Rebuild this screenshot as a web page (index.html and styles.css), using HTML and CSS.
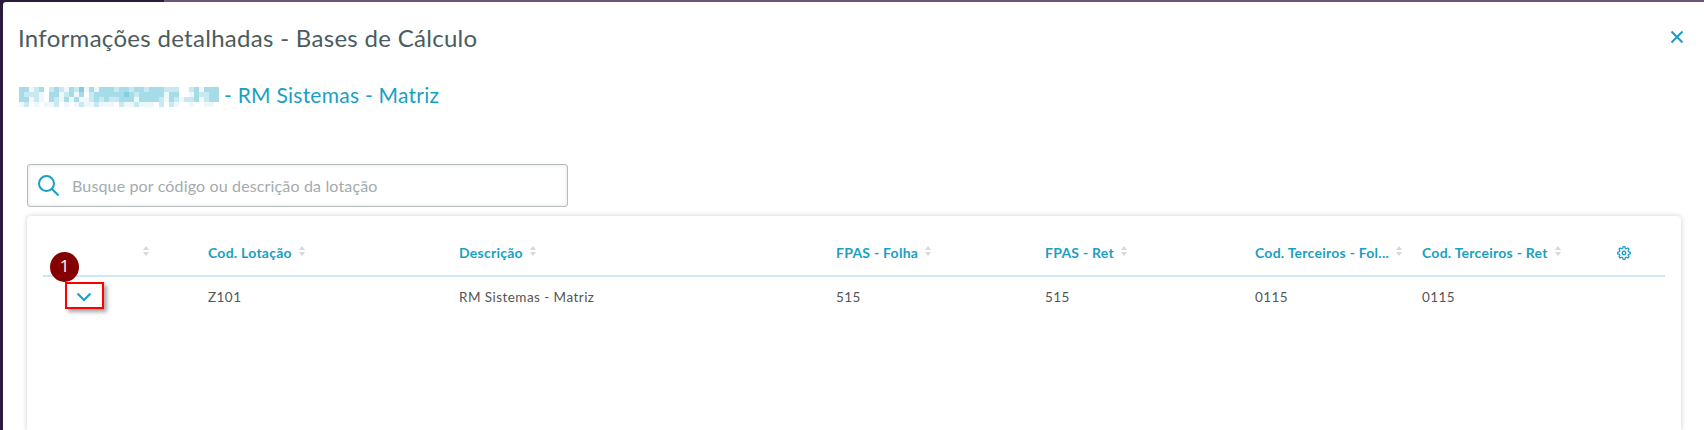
FILE: index.html
```html
<!DOCTYPE html>
<html lang="pt-BR">
<head>
  <meta charset="UTF-8" />
  <title>Informações detalhadas - Bases de Cálculo</title>
  <link rel="stylesheet" href="styles.css">
</head>
<body>
  <div class="topstrip"></div>
  <div class="modal">
    <div class="modal-head">
      <h1>Informações detalhadas - Bases de Cálculo</h1>
      <svg class="close" width="14" height="14" viewBox="0 0 14 14"><path d="M1.500 1.500l11 11M12.500 1.500l-11 11" fill="none" stroke="#1a9fc4" stroke-width="2"/></svg>
    </div>

    <div class="company">
      <svg class="blur" width="200" height="20" viewBox="0 0 40 4" shape-rendering="crispEdges" fill="none" stroke-width="1">
        <path stroke="#a6dbe8" d="M0 .5h2M4 .5h1M7 .5h1M10 .5h1M14 .5h1M16 .5h3M20 .5h2M23 .5h2M26 .5h3M35 .5h1M37 .5h3M0 1.500h1M6 1.500h2M10 1.500h1M12 1.500h1M15 1.500h6M22 1.500h1M24 1.500h5M30 1.500h2M35 1.500h1M38 1.500h2M0 2.500h2M6 2.500h1M9 2.500h1M11 2.500h1M15 2.500h1M17 2.500h1M20 2.500h3M24 2.500h4M30 2.500h1M35 2.500h1M38 2.500h2"/>
        <path stroke="#86cde0" d="M12 .5h1M21 1.500h1"/>
        <path stroke="#c8e9f1" d="M3 .5h1M6 .5h1M8 .5h1M11 .5h1M19 .5h1M22 .5h1M25 .5h1M29 .5h3M34 .5h1M1 1.500h3M9 1.500h1M14 1.500h1M23 1.500h1M36 1.500h2M3 2.500h1M7 2.500h1M14 2.500h1M16 2.500h1M18 2.500h2M28 2.500h1M31 2.500h1M33 2.500h2M37 2.500h1M1 3.500h1M7 3.500h1M12 3.500h1M15 3.500h1M20 3.500h1M23 3.500h1M28 3.500h1M30 3.500h1"/>
        <path stroke="#eef8fb" d="M2 .5h1M9 .5h1M13 .5h1M15 .5h1M36 .5h1M4 1.500h1M8 1.500h1M11 1.500h1M29 1.500h1M34 1.500h1M2 2.500h1M4 2.500h1M8 2.500h1M10 2.500h1M12 2.500h2M23 2.500h1M29 2.500h1M32 2.500h1M36 2.500h1M0 3.500h1M3 3.500h1M5 3.500h2M9 3.500h1M11 3.500h1M13 3.500h2M16 3.500h3M21 3.500h2M24 3.500h3M31 3.500h1M34 3.500h1M37 3.500h2"/>
      </svg>
      <span class="company-name">- RM Sistemas - Matriz</span>
    </div>

    <div class="search">
      <svg width="21" height="21" viewBox="0 0 21 21" fill="none" stroke="#1a9fc4" stroke-width="2"><circle cx="8.500" cy="8.500" r="7.500"/><path d="M14 14l6.500 6.500"/></svg>
      <span>Busque por código ou descrição da lotação</span>
    </div>

    <div class="card">
      <div class="row head">
        <div class="cell first"><i class="sort"></i></div>
        <div class="cell">Cod. Lotação <i class="sort"></i></div>
        <div class="cell">Descrição <i class="sort"></i></div>
        <div class="cell">FPAS - Folha <i class="sort"></i></div>
        <div class="cell">FPAS - Ret <i class="sort"></i></div>
        <div class="cell">Cod. Terceiros - Fol... <i class="sort"></i></div>
        <div class="cell">Cod. Terceiros - Ret <i class="sort"></i></div>
        <div class="cell gear">
          <svg width="14" height="14" viewBox="0 0 24 24" fill="none" stroke="#1a9fc4" stroke-width="2.200" stroke-linejoin="round"><circle cx="12" cy="12" r="3"/><path d="M19.400 15a1.650 1.650 0 0 0 .33 1.820l.06.06a2 2 0 0 1 0 2.830 2 2 0 0 1-2.830 0l-.06-.06a1.650 1.650 0 0 0-1.820-.33 1.650 1.650 0 0 0-1 1.510V21a2 2 0 0 1-2 2 2 2 0 0 1-2-2v-.09A1.650 1.650 0 0 0 9 19.400a1.650 1.650 0 0 0-1.820.33l-.06.06a2 2 0 0 1-2.830 0 2 2 0 0 1 0-2.830l.06-.06a1.650 1.650 0 0 0 .33-1.820 1.650 1.650 0 0 0-1.510-1H3a2 2 0 0 1-2-2 2 2 0 0 1 2-2h.09A1.650 1.650 0 0 0 4.600 9a1.650 1.650 0 0 0-.33-1.820l-.06-.06a2 2 0 0 1 0-2.830 2 2 0 0 1 2.830 0l.06.06a1.650 1.650 0 0 0 1.820.33H9a1.650 1.650 0 0 0 1-1.510V3a2 2 0 0 1 2-2 2 2 0 0 1 2 2v.09a1.650 1.650 0 0 0 1 1.510 1.650 1.650 0 0 0 1.820-.33l.06-.06a2 2 0 0 1 2.830 0 2 2 0 0 1 0 2.830l-.06.06a1.650 1.650 0 0 0-.33 1.820V9a1.650 1.650 0 0 0 1.510 1H21a2 2 0 0 1 2 2 2 2 0 0 1-2 2h-.09a1.650 1.650 0 0 0-1.510 1z"/></svg>
        </div>
      </div>
      <div class="row body">
        <div class="cell first">
          <svg class="chevron" width="16" height="10" viewBox="0 0 16 10"><path d="M1.500 1.500L8 8l6.500-6.500" fill="none" stroke="#1a9fc4" stroke-width="2"/></svg>
        </div>
        <div class="cell">Z101</div>
        <div class="cell">RM Sistemas - Matriz</div>
        <div class="cell">515</div>
        <div class="cell">515</div>
        <div class="cell">0115</div>
        <div class="cell">0115</div>
        <div class="cell"></div>
      </div>
      <div class="marker"></div>
      <div class="step">1</div>
    </div>
  </div>
</body>
</html>
```
FILE: styles.css
```css
html, body {
  margin: 0;
  height: 100%;
  overflow: hidden;
}

body {
  background: #2b1b3d;
  font-family: "Lato", "Open Sans", sans-serif;
}

.topstrip {
  height: 2px;
  margin-left: 164px;
  background: #6c5578;
}

.modal {
  margin-left: 3px;
  height: 428px;
  overflow: hidden;
  background: #fff;
  border-radius: 3px 0 0 0;
  padding: 0 23px 0 15px;
  box-sizing: border-box;
}

.modal-head {
  height: 73px;
  display: flex;
  align-items: center;
  justify-content: space-between;
}

h1 {
  margin: 0 0 2px;
  font-size: 24px;
  font-weight: 400;
  letter-spacing: .3px;
  color: #4a5c60;
}

.close {
  margin: -3px -3px 0 0;
}

.company {
  display: flex;
  align-items: center;
  gap: 5px;
  height: 24px;
  margin: 10px 0 0 1px;
  font-size: 21px;
  letter-spacing: .25px;
  color: #1a9fc4;
}

.company-name {
  margin-bottom: 6px;
}

.search {
  width: 541px;
  height: 43px;
  box-sizing: border-box;
  margin: 55px 0 0 9px;
  padding-left: 10px;
  display: flex;
  align-items: center;
  gap: 13px;
  border: 1px solid #b6bdbf;
  border-radius: 3px;
  box-shadow: inset 0 0 4px rgba(0, 0, 0, .12);
  font-size: 16px;
  letter-spacing: .15px;
  color: #a3abad;
}

.card {
  position: relative;
  width: 1654px;
  height: 214px;
  box-sizing: border-box;
  margin: 9px 0 0 9px;
  padding: 0 16px;
  border-radius: 4px 4px 0 0;
  box-shadow: 0 0 5px rgba(0, 0, 0, .2);
}

.row {
  display: grid;
  grid-template-columns: 165px 251px 377px 209px 210px 167px 195px 1fr;
  align-items: center;
}

.head {
  height: 59px;
  border-bottom: 2px solid #c9e9f3;
  font-size: 14px;
  font-weight: 700;
  letter-spacing: .25px;
  color: #1a9fc4;
}

.body {
  height: 40px;
  font-size: 13.500px;
  letter-spacing: .45px;
  color: #555;
}

.cell {
  display: flex;
  align-items: center;
  gap: 7px;
  white-space: nowrap;
}

.head .cell {
  padding-top: 13px;
}

.head .gear {
  padding-top: 15px;
}

.first {
  justify-content: flex-end;
  padding-right: 59px;
}

.body .first {
  justify-content: flex-start;
  padding-left: 33px;
  padding-right: 0;
}

/* seta dupla de ordenacao */
.sort {
  display: inline-flex;
  flex-direction: column;
  gap: 2px;
  margin-top: -2px;
}

.sort::before,
.sort::after {
  content: "";
  border-left: 3px solid transparent;
  border-right: 3px solid transparent;
}

.sort::before {
  border-bottom: 4px solid #d6d9da;
}

.sort::after {
  border-top: 4px solid #d6d9da;
}

.marker {
  position: absolute;
  left: 38px;
  top: 66px;
  width: 39px;
  height: 27px;
  box-sizing: border-box;
  border: 2px solid #f00;
  box-shadow: 3px 3px 4px rgba(0, 0, 0, .35);
}

.step {
  position: absolute;
  left: 23px;
  top: 36px;
  width: 29px;
  height: 30px;
  border-radius: 50%;
  background: #850000;
  color: #fff;
  font-family: "Open Sans", sans-serif;
  font-size: 17px;
  text-align: center;
  line-height: 28px;
}
```
